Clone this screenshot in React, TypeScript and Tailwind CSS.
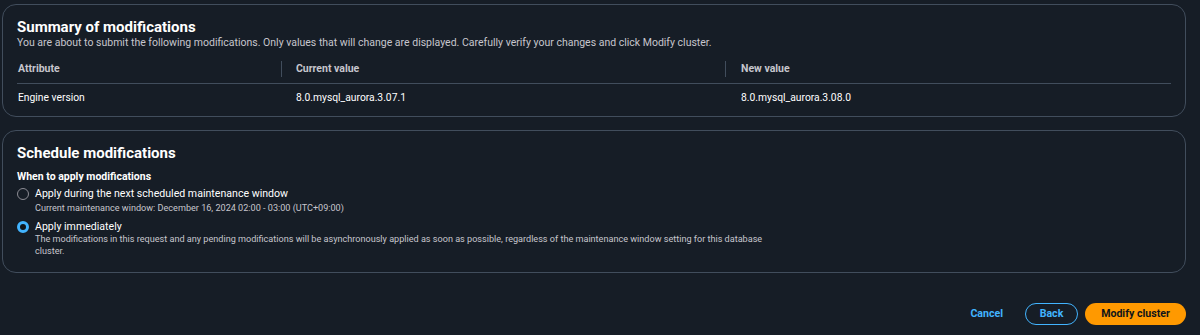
import React, { useState } from "react"

const rows = [
  { attribute: "Engine version", current: "8.0.mysql_aurora.3.07.1", next: "8.0.mysql_aurora.3.08.0" },
]

function Radio({ checked, onClick }: { checked: boolean; onClick: () => void }) {
  return (
    <button
      onClick={onClick}
      className={
        checked
          ? "mt-[2px] h-[12px] w-[12px] shrink-0 rounded-full border-[3.5px] border-[#42b4ff] bg-[#0f141a]"
          : "mt-[2px] h-[12px] w-[12px] shrink-0 rounded-full border-[1.5px] border-[#8c8c94] bg-transparent"
      }
    />
  )
}

export default function App() {
  const [when, setWhen] = useState<"window" | "now">("now")

  return (
    <div
      className="min-h-[335px] w-[1200px] bg-[#161d26] pl-[2px] pt-[4px] text-[#dedee3]"
      style={{ fontFamily: 'Roboto, "Noto Sans", sans-serif' }}
    >
      <div className="w-[1184px] rounded-[14px] border border-[#414d5c] px-[14px] pb-[5px] pt-[13px]">
        <h2 className="text-[15px] font-bold leading-[18px] text-[#ffffff]">Summary of modifications</h2>
        <p className="text-[10.5px] leading-[14px] text-[#c6c6cd]">
          You are about to submit the following modifications. Only values that will change are displayed. Carefully
          verify your changes and click Modify cluster.
        </p>
        <div className="mt-[4px] w-[1154px]">
          <div className="flex h-[30px] items-center border-b border-[#414d5c] text-[10.5px] font-bold text-[#c6c6cd]">
            <div className="w-[264px] shrink-0 pl-[1px]">Attribute</div>
            <div className="flex w-[444px] shrink-0 items-center">
              <span className="h-[16px] w-px bg-[#414d5c]" />
              <span className="ml-[14px]">Current value</span>
            </div>
            <div className="flex flex-1 items-center">
              <span className="h-[16px] w-px bg-[#414d5c]" />
              <span className="ml-[15px]">New value</span>
            </div>
          </div>
          {rows.map((r) => (
            <div key={r.attribute} className="flex h-[27px] items-center text-[10.3px] text-[#ffffff]">
              <div className="w-[264px] shrink-0 pl-[1px]">{r.attribute}</div>
              <div className="w-[444px] shrink-0 pl-[15px]">{r.current}</div>
              <div className="flex-1 pl-[16px]">{r.next}</div>
            </div>
          ))}
        </div>
      </div>

      <div className="mt-[13px] w-[1184px] rounded-[14px] border border-[#414d5c] px-[14px] pb-[15px] pt-[13px]">
        <h2 className="text-[15px] font-bold leading-[18px] text-[#ffffff]">Schedule modifications</h2>
        <div className="mt-[8px] text-[10.5px] font-bold leading-[14px] text-[#ffffff]">When to apply modifications</div>
        <div className="mt-[2px] flex gap-[6px]">
          <Radio checked={when === "window"} onClick={() => setWhen("window")} />
          <div>
            <div className="text-[10.6px] leading-[16px] text-[#ffffff]">Apply during the next scheduled maintenance window</div>
            <div className="text-[9.1px] leading-[12px] text-[#c6c6cd]">
              Current maintenance window: December 16, 2024 02:00 - 03:00 (UTC+09:00)
            </div>
          </div>
        </div>
        <div className="mt-[5px] flex gap-[6px]">
          <Radio checked={when === "now"} onClick={() => setWhen("now")} />
          <div className="w-[735px]">
            <div className="text-[10.6px] leading-[16px] text-[#ffffff]">Apply immediately</div>
            <div className="-mt-[2px] text-[9.1px] leading-[12px] text-[#c6c6cd]">
              The modifications in this request and any pending modifications will be asynchronously applied as soon as
              possible, regardless of the maintenance window setting for this database cluster.
            </div>
          </div>
        </div>
      </div>

      <div className="mt-[30px] flex w-[1184px] items-center justify-end">
        <button className="mr-[22px] text-[10.6px] font-bold text-[#42b4ff]">Cancel</button>
        <button className="h-[22px] w-[53px] rounded-full border-[1.5px] border-[#42b4ff] text-[10.6px] font-bold text-[#42b4ff]">
          Back
        </button>
        <button className="ml-[7px] h-[22px] w-[101px] rounded-full bg-[#ff9900] text-[10.6px] font-bold text-[#0f141a]">
          Modify cluster
        </button>
      </div>
    </div>
  )
}
